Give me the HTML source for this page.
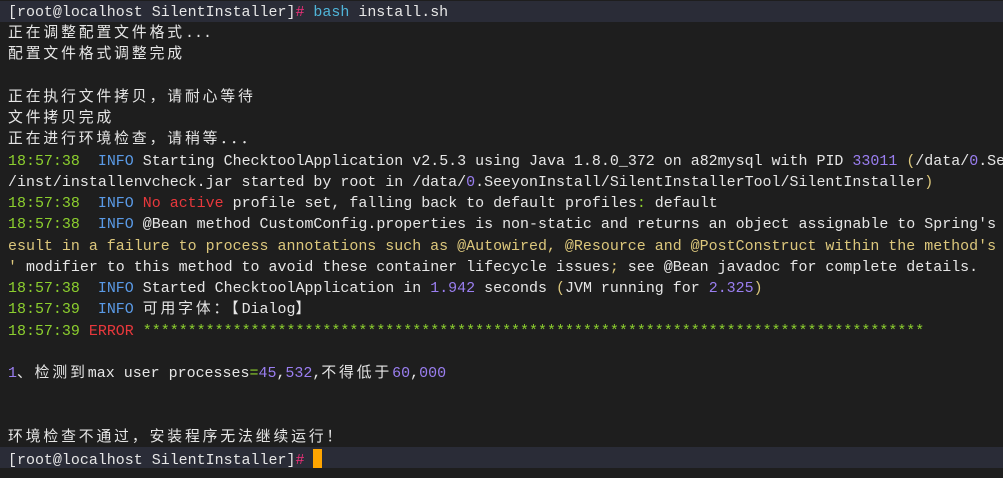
<!DOCTYPE html>
<html><head><meta charset="utf-8"><style>
body{margin:0;background:#1e1e1e;width:1003px;height:478px;overflow:hidden;}
#t{position:absolute;left:8px;top:1px;font-family:"Liberation Mono","Noto Sans CJK SC",monospace;font-size:14.97px;line-height:21.24px;color:#e6e6e6;}
.l{height:21.24px;white-space:pre;overflow:hidden;}
.i{position:relative;top:2px;}
.p{background:#2a2c37;margin-left:-8px;padding-left:8px;width:995px;}
.c{letter-spacing:2.9px;font-family:"Noto Sans CJK SC","WenQuanYi Zen Hei",sans-serif;line-height:1;font-size:14.8px;}
.g{color:#8ccf2e}.b{color:#5a9ae6}.r{color:#e8383c}.v{color:#9a7ef0}.y{color:#dcc77c}.h{color:#f0307a}.k{color:#4fb4d8}
.cur{display:inline-block;width:9px;height:19px;background:#ffa500;vertical-align:-4px;}
</style></head><body><div id="t"><div class="l p"><div class="i">[root@localhost SilentInstaller]<span class="h">#</span> <span class="k">bash</span> install.sh</div></div><div class="l"><div class="i"><span class="c">正在调整配置文件格式</span>...</div></div><div class="l"><div class="i"><span class="c">配置文件格式调整完成</span></div></div><div class="l"></div><div class="l"><div class="i"><span class="c">正在执行文件拷贝，请耐心等待</span></div></div><div class="l"><div class="i"><span class="c">文件拷贝完成</span></div></div><div class="l"><div class="i"><span class="c">正在进行环境检查，请稍等．．．</span></div></div><div class="l"><div class="i"><span class="g">18:57:38</span>  <span class="b">INFO</span> Starting ChecktoolApplication v2.5.3 using Java 1.8.0_372 on a82mysql with PID <span class="v">33011</span> <span class="y">(</span>/data/<span class="v">0</span>.Se</div></div><div class="l"><div class="i">/inst/installenvcheck.jar started by root in /data/<span class="v">0</span>.SeeyonInstall/SilentInstallerTool/SilentInstaller<span class="y">)</span></div></div><div class="l"><div class="i"><span class="g">18:57:38</span>  <span class="b">INFO</span> <span class="r">No active</span> profile set, falling back to default profiles<span class="g">:</span> default</div></div><div class="l"><div class="i"><span class="g">18:57:38</span>  <span class="b">INFO</span> @Bean method CustomConfig.properties is non-static and returns an object assignable to Spring's</div></div><div class="l y"><div class="i">esult in a failure to process annotations such as @Autowired, @Resource and @PostConstruct within the method's</div></div><div class="l"><div class="i"><span class="y">'</span> modifier to this method to avoid these container lifecycle issues<span class="y">;</span> see @Bean javadoc for complete details.</div></div><div class="l"><div class="i"><span class="g">18:57:38</span>  <span class="b">INFO</span> Started ChecktoolApplication in <span class="v">1.942</span> seconds <span class="y">(</span>JVM running for <span class="v">2.325</span><span class="y">)</span></div></div><div class="l"><div class="i"><span class="g">18:57:39</span>  <span class="b">INFO</span> <span class="c">可用字体：【</span>Dialog<span class="c">】</span></div></div><div class="l"><div class="i"><span class="g">18:57:39</span> <span class="r">ERROR</span> <span class="g">***************************************************************************************</span></div></div><div class="l"></div><div class="l"><div class="i"><span class="v">1</span><span class="c">、检测到</span>max user processes<span class="g">=</span><span class="v">45</span>,<span class="v">532</span>,<span class="c">不得低于</span><span class="v">60</span>,<span class="v">000</span></div></div><div class="l"></div><div class="l"></div><div class="l"><div class="i"><span class="c">环境检查不通过，安装程序无法继续运行！</span></div></div><div class="l p"><div class="i">[root@localhost SilentInstaller]<span class="h">#</span> <span class="cur"></span></div></div></div></body></html>
